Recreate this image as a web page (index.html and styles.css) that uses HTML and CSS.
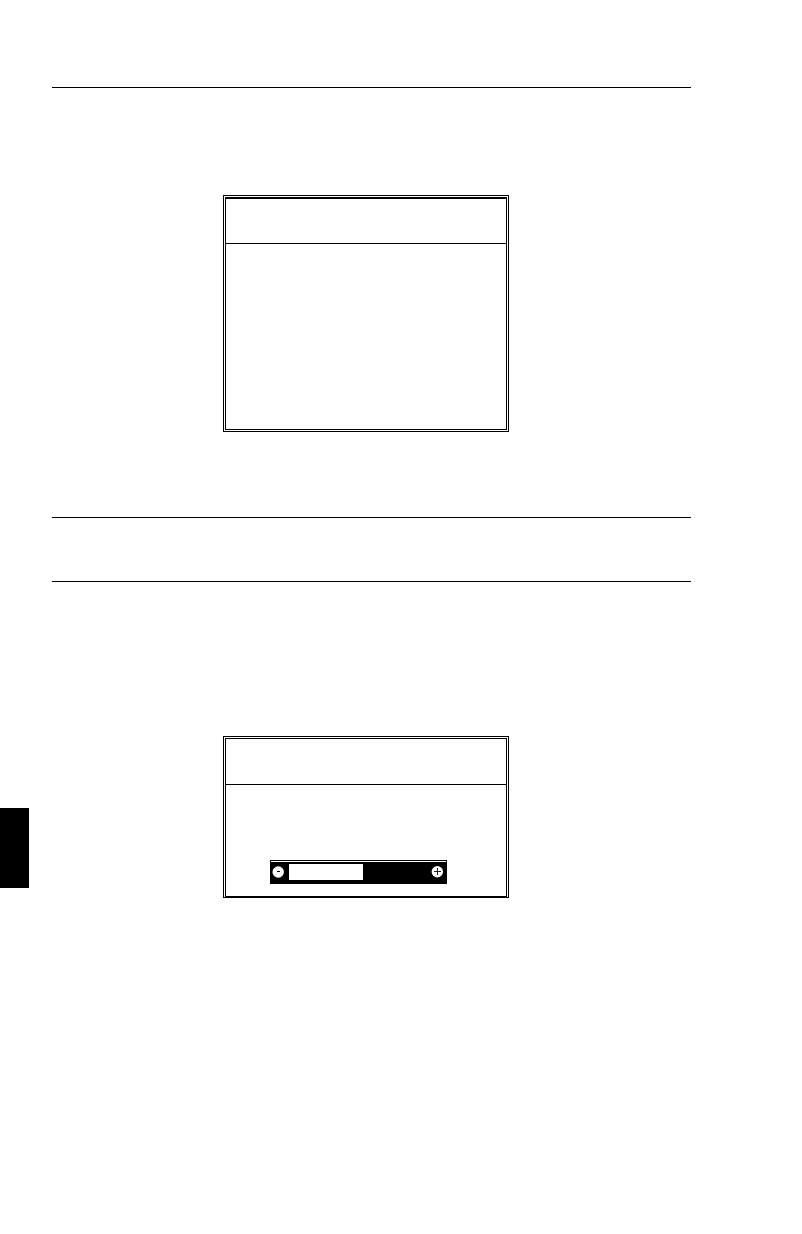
FILE: index.html
```html
<!DOCTYPE html>
<html lang="en">
<head>
    <meta charset="UTF-8">
    <meta name="viewport" content="width=device-width, initial-scale=1.0">
    <link rel="stylesheet" href="styles.css">
</head>
<body>
    <div class="page">
        <aside class="side-tab"></aside>

        <main class="content">
            <section class="first-section">
                <div class="screen">
                    <div class="screen-inner heavy-top">
                        <div class="screen-header"></div>
                        <div class="screen-body empty"></div>
                    </div>
                </div>
            </section>

            <section class="spacer-section"></section>

            <section class="second-section">
                <div class="screen flush-bottom">
                    <div class="screen-inner">
                        <div class="screen-header tall"></div>
                        <div class="screen-body">
                            <div class="level">
                                <div class="level-bar">
                                    <button class="level-btn" type="button" aria-label="Decrease">
                                        <svg width="12" height="12" viewBox="0 0 12 12">
                                            <circle cx="6.2" cy="6" r="5.7" fill="#fff"/>
                                            <path d="M5 5.5h3" stroke="#000"/>
                                        </svg>
                                    </button>
                                    <input class="level-range" type="range" min="0" max="100" value="53" aria-label="Level" style="background-size: 53% 100%">
                                    <button class="level-btn" type="button" aria-label="Increase">
                                        <svg width="12" height="12" viewBox="0 0 12 12">
                                            <circle cx="6.3" cy="5.8" r="5.7" fill="#fff"/>
                                            <path d="M3 5.5h7M6.5 2v7" stroke="#222"/>
                                        </svg>
                                    </button>
                                </div>
                            </div>
                        </div>
                    </div>
                </div>
            </section>
        </main>
    </div>
</body>
</html>
```

FILE: styles.css
```css
* {
    box-sizing: border-box;
}

body {
    margin: 0;
    background: #fff;
    color: #000;
    font-family: "Liberation Sans", Arial, sans-serif;
}

.page {
    display: grid;
    grid-template-columns: 52px 1fr;
    min-height: 100vh;
}

.side-tab {
    width: 29px;
    height: 80px;
    margin-top: 808px;
    background: #000;
}

.content {
    padding: 87px 111px 0 0;
}

/* Each section starts with a thin rule */
.first-section,
.spacer-section,
.second-section {
    border-top: 1px solid #000;
}

.first-section {
    padding: 107px 0 85px;
}

.spacer-section {
    height: 64px;
}

.second-section {
    padding-top: 154px;
}

/* Double framed screen */
.screen {
    width: 286px;
    margin-left: 171px;
    padding: 1px;
    border: 1px solid #000;
}

.screen.flush-bottom {
    padding-bottom: 0;
}

.screen-inner {
    border: 1px solid #000;
}

.screen-inner.heavy-top {
    border-top-width: 2px;
}

.screen-header {
    height: 45px;
    border-bottom: 1px solid #000;
}

.screen-header.tall {
    height: 46px;
}

.screen-body {
    padding: 75px 59px 12px 44px;
}

.screen-body.empty {
    height: 185px;
}

/* Level slider */
.level {
    padding-top: 1px;
    border: 1px solid #000;
    border-bottom: none;
}

.level-bar {
    display: flex;
    align-items: center;
    height: 22px;
    padding: 0 3px 2px 1px;
    background: #000;
}

.level-btn {
    display: flex;
    padding: 0;
    border: none;
    background: none;
    cursor: pointer;
}

.level-range {
    -webkit-appearance: none;
    appearance: none;
    flex: 1;
    min-width: 0;
    height: 16px;
    margin: 0 2px 0 5px;
    background: #000 linear-gradient(#fff, #fff) no-repeat left top;
    cursor: pointer;
}

.level-range::-webkit-slider-thumb {
    -webkit-appearance: none;
    width: 1px;
    height: 16px;
    background: transparent;
}
```
